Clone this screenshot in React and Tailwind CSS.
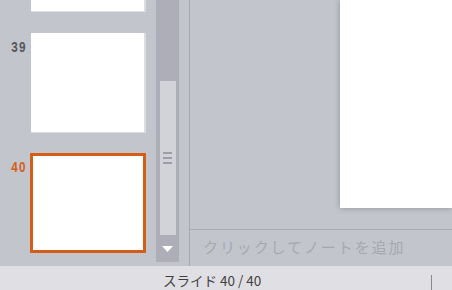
function Thumb({ num, selected, first }) {
  return (
    <div className={`flex ${first ? "-mt-[88px]" : selected ? "mt-[20px]" : "mt-[21px]"}`}>
      <div
        className={`w-[30px] shrink-0 pr-[3px] pt-[5px] text-right text-[15px] font-bold leading-[17px] ${
          selected ? "text-[#d65d17]" : "text-[#55565c]"
        }`}
        style={{ fontFamily: '"Liberation Sans", sans-serif' }}
      >
        {num && <span className="inline-block origin-right scale-x-[0.78] tracking-[1.5px]">{num}</span>}
      </div>
      {selected ? (
        <div className="h-[100px] w-[116px] border-[3px] border-[#d65d17] bg-white" />
      ) : (
        <div className="ml-px h-[100px] w-[115px] border-b border-r-2 border-[#dcdce1] bg-white" />
      )}
    </div>
  );
}

export default function App() {
  return (
    <div
      className="flex h-[290px] w-[452px] flex-col overflow-hidden bg-[#c3c5cd]"
      style={{ fontFamily: '"Noto Sans CJK JP", "Noto Sans", sans-serif' }}
    >
      <div className="flex h-[266px] shrink-0">
        {/* thumbnails */}
        <div className="w-[156px] shrink-0 overflow-hidden">
          <Thumb first />
          <Thumb num="39" />
          <Thumb num="40" selected />
        </div>

        {/* scrollbar */}
        <div className="flex h-[262px] w-[23px] shrink-0 flex-col items-center bg-[#adaeb8]">
          <div className="mt-[81px] flex h-[154px] w-[16px] flex-col items-center justify-center gap-[3px] bg-[#d2d3d8]">
            <div className="h-[2px] w-[9px] bg-[#9d9fa7]" />
            <div className="h-[2px] w-[9px] bg-[#9d9fa7]" />
            <div className="h-[2px] w-[9px] bg-[#9d9fa7]" />
          </div>
          <svg className="mt-[11px]" width="11" height="6" viewBox="0 0 11 6">
            <path d="M0 0 L11 0 L5.5 6 Z" fill="#ffffff" />
          </svg>
        </div>

        <div className="w-[10px] shrink-0" />
        <div className="w-px shrink-0 bg-[#a6a8b0]" />

        {/* main */}
        <div className="flex flex-1 flex-col">
          <div className="h-[229px] shrink-0 pl-[150px]">
            <div className="h-[208px] bg-white shadow-[0_0_6px_rgba(0,0,0,0.28)]" />
          </div>
          <div className="h-px shrink-0 bg-[#a9abb3]" />
          <div className="flex flex-1 items-center pl-[13px] pb-[1px] text-[15px] tracking-[1.9px] text-[#a6a8b0]">
            クリックしてノートを追加
          </div>
        </div>
      </div>

      {/* status bar */}
      <div className="relative flex h-[24px] shrink-0 items-center bg-[#e0e0e4] pl-[163px] text-[13.5px] text-[#404040]">
        <span className="pt-[5px]">スライド 40 / 40</span>
        <div className="absolute bottom-0 left-[431px] h-[15px] w-px bg-[#8a8a8a]" />
      </div>
    </div>
  );
}
